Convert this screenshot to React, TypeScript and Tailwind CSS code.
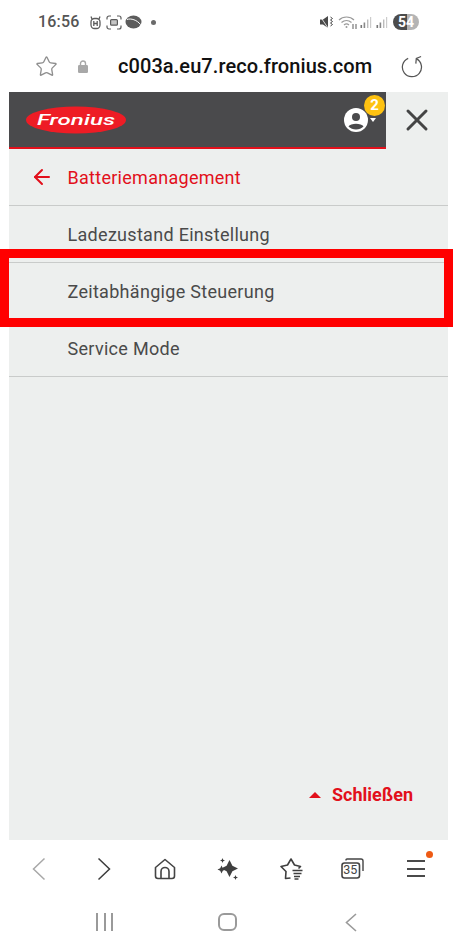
import React from 'react';
import { ArrowLeft, Star, X } from 'lucide-react';

const menuItems = ['Ladezustand Einstellung', 'Zeitabhängige Steuerung', 'Service Mode'];

const StatusLeftIcons = () => (
  <div className="flex items-center ml-[9px] text-[#5c5c5c]">
    {/* mower brand badge */}
    <svg width="13" height="15" viewBox="0 0 13 15" fill="none" stroke="currentColor" strokeWidth="1.3">
      <path d="M2 1.5 L3 4 M11 1.5 L10 4" />
      <rect x="2" y="3.5" width="9" height="10" rx="3.5" />
      <path d="M4.8 6 V11 M8.2 6 V11 M4.8 8.5 H8.2" />
    </svg>
    {/* screenshot frame */}
    <svg className="ml-[4px]" width="16" height="15" viewBox="0 0 16 15" fill="none" stroke="currentColor" strokeWidth="1.2">
      <path d="M1 4.5 V3 a2 2 0 0 1 2 -2 H5 M11 1 H13 a2 2 0 0 1 2 2 V4.5 M15 10.5 V12 a2 2 0 0 1 -2 2 H11 M5 14 H3 a2 2 0 0 1 -2 -2 V10.5" />
      <rect x="4.6" y="4.6" width="6.8" height="5.6" rx="1" fill="currentColor" fillOpacity="0.35" />
    </svg>
    {/* bowl */}
    <svg className="ml-[3px]" width="17" height="14" viewBox="0 0 17 14">
      <ellipse cx="8.5" cy="7" rx="8" ry="6.5" fill="currentColor" />
      <path d="M2 4.5 C6 3 12 5 15.5 9.5" stroke="#fff" strokeWidth="1" fill="none" />
    </svg>
    <span className="ml-[9px] w-[5px] h-[5px] rounded-full bg-[#6a6a6a]" />
  </div>
);

const SignalIcon = ({ className }: { className: string }) => (
  <svg className={className} width="12" height="13" viewBox="0 0 12 13">
    <rect x="0.5" y="9" width="1.6" height="3" fill="#777" />
    <rect x="3.6" y="6.5" width="1.6" height="5.5" fill="#888" />
    <rect x="7" y="3.5" width="1.4" height="8.5" fill="#bbb" />
    <rect x="10" y="1" width="1.2" height="11" fill="#ccc" />
  </svg>
);

const StatusRightIcons = () => (
  <div className="flex items-center text-[#6a6a6a]">
    {/* muted */}
    <svg width="13" height="14" viewBox="0 0 13 14" fill="#4a4a4a">
      <path d="M0 4.5 H3 L8 1 V13 L3 9.5 H0 Z" />
      <path d="M0 1 L8 13" stroke="#fff" strokeWidth="0.8" />
      <path d="M10.5 2 l2 1.5 l-2 1.5 l2 1.5 l-2 1.5 l2 1.5 l-2 1.5" stroke="#4a4a4a" strokeWidth="1" fill="none" />
    </svg>
    {/* wifi */}
    <svg className="ml-[5px]" width="20" height="15" viewBox="0 0 20 15" fill="none" stroke="#9a9a9a" strokeWidth="1.2">
      <path d="M1 5 C5 1 12 1 16 5" />
      <path d="M3.5 7.5 C6.5 4.8 10.5 4.8 13.5 7.5" />
      <path d="M6 10 C7.6 8.6 9.4 8.6 11 10" />
      <circle cx="8.5" cy="12" r="1" fill="#9a9a9a" stroke="none" />
      <path d="M15 9 V14 M18 9 V14" stroke="#777" />
    </svg>
    <SignalIcon className="ml-[2px]" />
    <SignalIcon className="ml-[4px]" />
    {/* battery */}
    <div className="ml-[5px] w-[26px] h-[16px] rounded-full bg-[linear-gradient(90deg,#4c4c4c_0,#4c4c4c_52%,#b4b4b4_52%,#b4b4b4_100%)] flex items-center justify-center text-white text-[14px] font-bold leading-none">
      54
    </div>
  </div>
);

const FroniusLogo = () => (
  <svg width="100" height="28" viewBox="0 0 100 28">
    <ellipse cx="50" cy="14" rx="50" ry="13.5" fill="#ee1c25" />
    <text
      x="50"
      y="19"
      textAnchor="middle"
      fill="#fff"
      fontFamily="'Roboto', sans-serif"
      fontStyle="italic"
      fontWeight="500"
      fontSize="15"
      textLength="78"
      lengthAdjust="spacingAndGlyphs"
    >
      Fronius
    </text>
  </svg>
);

const UserIcon = () => (
  <svg width="24" height="24" viewBox="0 0 24 24">
    <circle cx="12" cy="12" r="12" fill="#fff" />
    <circle cx="12" cy="9" r="4" fill="#4a4a4c" />
    <path d="M4.5 18.5 C6.5 14.8 17.5 14.8 19.5 18.5 C17.5 20.5 15 21.5 12 21.5 C9 21.5 6.5 20.5 4.5 18.5 Z" fill="#4a4a4c" />
  </svg>
);

const NavChevron = ({ left, color }: { left?: boolean; color: string }) => (
  <svg width="14" height="24" viewBox="0 0 14 24" fill="none" stroke={color} strokeWidth="1.5">
    <path d={left ? 'M12.5 1.5 L1.5 12 L12.5 22.5' : 'M1.5 1.5 L12.5 12 L1.5 22.5'} />
  </svg>
);

const HomeIcon = () => (
  <svg width="22" height="22" viewBox="0 0 22 22" fill="none" stroke="#444" strokeWidth="1.6" strokeLinejoin="round">
    <path d="M1.5 9.5 L11 1.5 L20.5 9.5 V18 a2.5 2.5 0 0 1 -2.5 2.5 H4 a2.5 2.5 0 0 1 -2.5 -2.5 Z" />
    <path d="M7 20.5 V13.5 a4 4 0 0 1 8 0 V20.5" />
  </svg>
);

const SparkleIcon = () => (
  <svg width="22" height="22" viewBox="0 0 22 22" fill="#3f3f3f">
    <path d="M12.5 2 L15.4 7.8 L21 10.5 L15.4 13.2 L12.5 19 L9.6 13.2 L4 10.5 L9.6 7.8 Z" />
    <path d="M4.5 7.5 L5.8 10.2 L8.5 11.5 L5.8 12.8 L4.5 15.5 L3.2 12.8 L0.5 11.5 L3.2 10.2 Z" />
    <path d="M5.5 0 L6.2 1.8 L8 2.5 L6.2 3.2 L5.5 5 L4.8 3.2 L3 2.5 L4.8 1.8 Z" />
    <path d="M18.5 17 L19.2 18.8 L21 19.5 L19.2 20.2 L18.5 22 L17.8 20.2 L16 19.5 L17.8 18.8 Z" />
  </svg>
);

const StarListIcon = () => (
  <svg width="23" height="22" viewBox="0 0 23 22" fill="none" stroke="#3f3f3f" strokeWidth="1.6" strokeLinejoin="round">
    <path d="M10.5 20 L5.5 20.5 L6 13.5 L1 8.5 L7.5 7 L11 1 L14.5 7 L20.5 8.5 L18.5 10.5" />
    <path d="M12.5 12.5 H22.5 M13.5 15.5 H21.5 M14 18.5 H20 M14.5 21 H18.5" strokeWidth="1.3" />
  </svg>
);

const TabsIcon = () => (
  <div className="relative w-[23px] h-[21px]">
    <svg className="absolute inset-0" width="23" height="21" viewBox="0 0 23 21" fill="none" stroke="#444">
      <path d="M5 2.5 V2 a1 1 0 0 1 1 -1 H20 a2 2 0 0 1 2 2 V13" strokeWidth="1.4" />
      <rect x="1" y="5" width="17.5" height="15" rx="2.5" strokeWidth="1.6" />
    </svg>
    <span className="absolute left-[1px] top-[5px] w-[17.5px] h-[15px] flex items-center justify-center text-[12.5px] leading-none text-[#444]">
      35
    </span>
  </div>
);

const MenuIcon = () => (
  <div className="relative w-[18px] h-[17px] flex flex-col justify-between">
    <span className="h-[2px] bg-[#4a4a4a]" />
    <span className="h-[2px] bg-[#4a4a4a]" />
    <span className="h-[2px] bg-[#4a4a4a]" />
    <span className="absolute -top-[9px] -right-[8px] w-[7px] h-[7px] rounded-full bg-[#ee5a14]" />
  </div>
);

const App = () => {
  return (
    <div className="relative w-[453px] h-[950px] bg-white overflow-hidden flex flex-col font-['Roboto',sans-serif]">
      {/* phone status bar */}
      <div className="h-[44px] pl-[38px] pr-[34px] flex items-center justify-between">
        <div className="flex items-center">
          <span className="text-[16px] font-medium text-[#555] tracking-[0.2px]">16:56</span>
          <StatusLeftIcons />
        </div>
        <StatusRightIcons />
      </div>

      {/* browser url bar */}
      <div className="h-[48px] flex items-center pb-[4px]">
        <div className="w-[70px] pl-[35px] flex items-center">
          <Star size={23} strokeWidth={1.4} className="text-[#8f8f8f]" />
        </div>
        <div className="w-[48px] pl-[8px] flex items-center">
          <svg width="10" height="13" viewBox="0 0 10 13" fill="#a8a8a8">
            <path d="M2.5 5.5 V3.5 a2.5 2.5 0 0 1 5 0 V5.5" fill="none" stroke="#a8a8a8" strokeWidth="1.4" />
            <rect x="0" y="5" width="10" height="8" rx="1.2" />
          </svg>
        </div>
        <span className="w-[283px] text-[20px] font-medium text-[#111] tracking-[0.08px]">c003a.eu7.reco.fronius.com</span>
        <svg width="22" height="23" viewBox="0 0 23 24" fill="none" stroke="#555" strokeWidth="1.3">
          <path d="M7.5 3.5 A10 10 0 1 0 16 3.8" />
          <path d="M15.5 9 L16 3.5 L21 1.5" />
        </svg>
      </div>

      {/* fronius panel */}
      <div className="ml-[9px] mr-[5px] h-[748px] bg-[#edefee] flex flex-col">
        <div className="h-[57px] flex">
          <div className="w-[377px] bg-[#4a4a4c] border-b-2 border-[#e2101b] pl-[17px] pr-[18px] flex items-center justify-between">
            <FroniusLogo />
            <div className="relative flex items-center">
              <UserIcon />
              <span className="absolute right-[-8px] top-[10px] w-0 h-0 border-x-[3.5px] border-x-transparent border-t-[4px] border-t-white" />
              <span className="absolute -top-[13px] -right-[17px] w-[21px] h-[21px] rounded-full bg-[#fec211] text-white text-[15px] font-bold flex items-center justify-center leading-none">
                2
              </span>
            </div>
          </div>
          <div className="flex-1 flex items-center justify-center pb-[2px]">
            <X size={36} strokeWidth={2} className="text-[#444]" />
          </div>
        </div>

        <div className="h-[57px] pl-[21px] border-b border-[#c9cbca] flex items-center text-[#e2101b]">
          <ArrowLeft size={24} strokeWidth={2} />
          <span className="ml-[13.5px] text-[18px] tracking-[0.28px]">Batteriemanagement</span>
        </div>

        {menuItems.map((item) => (
          <div key={item} className="h-[57px] pl-[58.5px] pt-[1px] border-b border-[#c9cbca] flex items-center text-[18px] tracking-[0.3px] text-[#4a4a4a]">
            {item}
          </div>
        ))}

        <div className="mt-auto h-[59px] pr-[35px] flex items-start justify-end">
          <div className="flex items-center text-[#e2101b]">
            <span className="w-0 h-0 border-x-[6px] border-x-transparent border-b-[6px] border-b-[#e2101b]" />
            <span className="ml-[11px] text-[18px] font-bold">Schließen</span>
          </div>
        </div>
      </div>

      {/* browser toolbar */}
      <div className="h-[57px] pl-[7px] flex items-center">
        <div className="w-[64px] flex justify-center"><NavChevron left color="#a8a8a8" /></div>
        <div className="w-[66px] flex justify-center"><NavChevron color="#3c3c3c" /></div>
        <div className="w-[56px] flex justify-center"><HomeIcon /></div>
        <div className="w-[70px] flex justify-center"><SparkleIcon /></div>
        <div className="w-[56px] flex justify-center"><StarListIcon /></div>
        <div className="w-[66px] flex justify-center"><TabsIcon /></div>
        <div className="w-[62px] flex justify-center"><MenuIcon /></div>
      </div>

      {/* android nav */}
      <div className="flex-1 flex items-start pt-[16px]">
        <div className="ml-[96px] w-[17px] h-[18px] flex justify-between">
          <span className="w-[2px] bg-[#9a9a9a]" />
          <span className="w-[2px] bg-[#9a9a9a]" />
          <span className="w-[2px] bg-[#9a9a9a]" />
        </div>
        <div className="ml-[105px] w-[19px] h-[18px] rounded-[6px] border-2 border-[#9a9a9a]" />
        <div className="ml-[108px]">
          <svg width="12" height="19" viewBox="0 0 12 19" fill="none" stroke="#9a9a9a" strokeWidth="1.6">
            <path d="M11 1 L1.5 9.5 L11 18" />
          </svg>
        </div>
      </div>

      {/* red highlight frame from the annotated screenshot */}
      <div className="absolute left-0 top-[249px] w-[453px] h-[78px] border-[9px] border-[#ff0000] pointer-events-none" />
    </div>
  );
};

export default App;
